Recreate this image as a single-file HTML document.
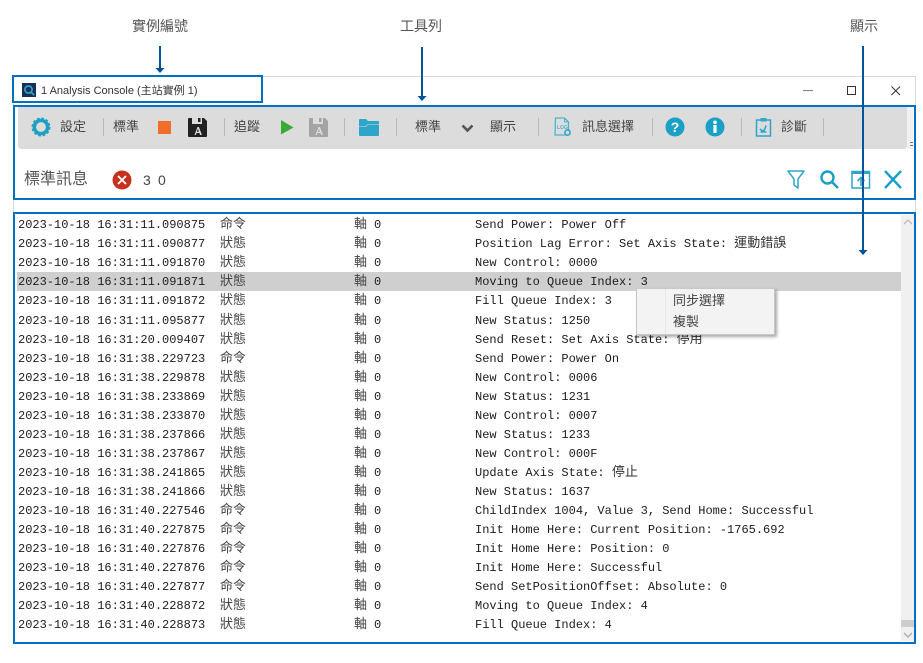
<!DOCTYPE html>
<html><head><meta charset="utf-8">
<style>
html,body{margin:0;padding:0;background:#fff;}
#p{position:relative;width:923px;height:663px;overflow:hidden;background:#fff;font-family:"Liberation Sans","Noto Sans CJK TC",sans-serif;color:#444;}
.a{position:absolute;}
.t{position:absolute;white-space:nowrap;line-height:18px;height:18px;font-size:13px;color:#444;}
.sep{position:absolute;top:118px;width:1px;height:18px;background:#b9b9b9;}
.r{position:absolute;left:0;height:19px;width:900px;}
.r span{position:absolute;top:1px;line-height:19px;white-space:pre;font-family:"Liberation Mono","Noto Sans CJK TC",monospace;font-size:12px;color:#1c1c1c;}
.r b{font-weight:normal;font-size:13px;line-height:0;font-family:"Noto Sans CJK TC",sans-serif;color:#444;}
.r span.m b{color:#333;}
svg{position:absolute;overflow:visible;}
</style></head>
<body><div id="p">
<div class="t" style="left:132px;top:17px;font-size:14px;color:#555">實例編號</div>
<div class="t" style="left:400px;top:17px;font-size:14px;color:#555">工具列</div>
<div class="t" style="left:850px;top:17px;font-size:14px;color:#555">顯示</div>

<!-- window -->
<div class="a" style="left:13px;top:76px;width:901px;height:566px;border:1px solid #d9d9d9;"></div>
<div class="a" style="left:22px;top:83px;width:14px;height:14px;background:#14305a;"></div>
<svg style="left:22px;top:83px" width="14" height="14"><circle cx="6.500" cy="6.500" r="3.600" fill="none" stroke="#35a5c8" stroke-width="1.600"/><path d="M9 9l3.200 3.200" stroke="#35a5c8" stroke-width="1.600"/></svg>
<div class="t" style="left:41px;top:82px;font-size:11px;color:#333">1 Analysis Console (主站實例 1)</div>
<svg style="left:800px;top:84px" width="105" height="14"><path d="M3 6.500h10" stroke="#888" stroke-width="1.200"/><rect x="47.500" y="2.500" width="8" height="8" fill="none" stroke="#333" stroke-width="1"/><path d="M91.500 2.500l8.500 8.500M100 2.500l-8.500 8.500" stroke="#333" stroke-width="1" fill="none"/></svg>

<!-- toolbar -->
<div class="a" style="left:18px;top:107px;width:889px;height:42px;background:#dcdcdc;border-radius:0 0 3px 3px;"></div>
<div class="a" style="left:907px;top:107px;width:6px;height:42px;background:#f1f1f1;"></div>
<div class="a" style="left:910px;top:142px;width:3px;height:1px;background:#777;"></div>
<div class="a" style="left:910px;top:145px;width:3px;height:1px;background:#777;"></div>

<svg style="left:31px;top:117px" width="20" height="20"><circle cx="10" cy="10" r="6.600" fill="none" stroke="#1f9fc4" stroke-width="3.400"/><circle cx="10" cy="10" r="8.500" fill="none" stroke="#1f9fc4" stroke-width="2" stroke-dasharray="2.700 1.750"/></svg>
<div class="t" style="left:60px;top:118px">設定</div>
<div class="sep" style="left:103px"></div>
<div class="t" style="left:113px;top:118px">標準</div>
<div class="a" style="left:158px;top:121px;width:13px;height:13px;background:#f26c2a;"></div>
<svg style="left:188px;top:117px" width="20" height="20"><path d="M1 1h3v6h10V1h2l3 3v15a1 1 0 0 1-1 1H1a1 1 0 0 1-1-1V2a1 1 0 0 1 1-1z" fill="#222"/><rect x="10" y="1" width="2.500" height="4" fill="#222"/><path d="M6.500 18l3-8h1.400l3 8h-1.800l-.6-2h-3l-.6 2zM8.800 14.800h2.100l-1-3.200z" fill="#ddd"/></svg>
<div class="sep" style="left:224px"></div>
<div class="t" style="left:234px;top:118px">追蹤</div>
<svg style="left:281px;top:120px" width="13" height="15"><path d="M0 0l12.500 7.500L0 14.500z" fill="#3aaa35"/></svg>
<svg style="left:309px;top:117px" width="20" height="20"><path d="M1 1h3v6h10V1h2l3 3v15a1 1 0 0 1-1 1H1a1 1 0 0 1-1-1V2a1 1 0 0 1 1-1z" fill="#a4a4a4"/><rect x="10" y="1" width="2.500" height="4" fill="#a4a4a4"/><path d="M6.500 18l3-8h1.400l3 8h-1.800l-.6-2h-3l-.6 2zM8.800 14.800h2.100l-1-3.200z" fill="#ddd"/></svg>
<div class="sep" style="left:344px"></div>
<svg style="left:359px;top:118px" width="21" height="18"><path d="M0 2a1 1 0 0 1 1-1h6l2 2h10a1 1 0 0 1 1 1v2.500H8.500l-2 2H0z" fill="#2ea6c9"/><path d="M0 9h6.800l2-2H20V17a1 1 0 0 1-1 1H1a1 1 0 0 1-1-1z" fill="#2ea6c9"/></svg>
<div class="sep" style="left:396px"></div>
<div class="t" style="left:415px;top:118px">標準</div>
<svg style="left:461px;top:124px" width="13" height="9"><path d="M1.500 1.500l5 5 5-5" fill="none" stroke="#555" stroke-width="2.600"/></svg>
<div class="t" style="left:490px;top:118px">顯示</div>
<div class="sep" style="left:538px"></div>
<svg style="left:554px;top:117px" width="18" height="20"><path d="M1.500 1h9l4 4v13h-13.500z" fill="none" stroke="#4cb3d1" stroke-width="1.300"/><path d="M10.500 1v4h4" fill="none" stroke="#4cb3d1" stroke-width="1"/><text x="3" y="12" font-size="5" font-weight="bold" fill="#4cb3d1" font-family="Liberation Sans">LOG</text><circle cx="13.500" cy="15.500" r="2.600" fill="#dcdcdc" stroke="#2ea6c9" stroke-width="1.600"/></svg>
<div class="t" style="left:582px;top:118px">訊息選擇</div>
<div class="sep" style="left:652px"></div>
<svg style="left:665px;top:117px" width="20" height="20"><circle cx="10" cy="10" r="9.500" fill="#18a0c6"/><text x="10" y="15" text-anchor="middle" font-size="14" font-weight="bold" fill="#fff" font-family="Liberation Sans">?</text></svg>
<svg style="left:705px;top:117px" width="20" height="20"><circle cx="10" cy="10" r="9.500" fill="#18a0c6"/><rect x="8.400" y="8" width="3.200" height="8" fill="#fff"/><circle cx="10" cy="5.300" r="1.800" fill="#fff"/></svg>
<div class="sep" style="left:741px"></div>
<svg style="left:755px;top:117px" width="17" height="20"><rect x="1.500" y="3" width="14" height="16" fill="none" stroke="#2ea6c9" stroke-width="1.500"/><rect x="5.500" y="1" width="6" height="3.500" fill="#2ea6c9"/><path d="M5 12l2.500 2 2-1 1.500-4.500M5.500 15h6" fill="none" stroke="#2ea6c9" stroke-width="1.600"/></svg>
<div class="t" style="left:781px;top:118px">診斷</div>
<div class="sep" style="left:823px"></div>

<!-- second row -->
<div class="t" style="left:24px;top:171px;font-size:16px;color:#555">標準訊息</div>
<svg style="left:112px;top:170px" width="20" height="20"><circle cx="10" cy="10" r="9.500" fill="#c5321f"/><path d="M6 6l8 8M14 6l-8 8" stroke="#fff" stroke-width="1.800"/></svg>
<div class="t" style="left:143px;top:171px;font-size:14px;color:#444">3</div>
<div class="t" style="left:158px;top:171px;font-size:14px;color:#444">0</div>
<svg style="left:787px;top:170px" width="18" height="19"><path d="M1 1h16l-6 8v9l-4-3V9z" fill="none" stroke="#2ea6c9" stroke-width="1.500" stroke-linejoin="round"/></svg>
<svg style="left:820px;top:170px" width="19" height="19"><circle cx="7.500" cy="7.500" r="6" fill="none" stroke="#18a0c6" stroke-width="2.400"/><path d="M12 12l6 6" stroke="#18a0c6" stroke-width="2.600"/></svg>
<svg style="left:851px;top:170px" width="20" height="19"><rect x="1" y="1.500" width="17.500" height="16.500" fill="none" stroke="#2ea6c9" stroke-width="1.500"/><path d="M1 3h17.500" stroke="#2ea6c9" stroke-width="2"/><path d="M10 16V8M6.500 11l3.500-3.500 3.500 3.500" fill="none" stroke="#2ea6c9" stroke-width="1.600"/></svg>
<svg style="left:883px;top:170px" width="20" height="19"><path d="M2 1l16 17M18 1L2 18" stroke="#18a0c6" stroke-width="2.400"/></svg>

<!-- log -->
<div class="a" style="left:17px;top:272px;width:884px;height:19px;background:#cfcfcf;"></div>
<div class="r" style="top:215px"><span style="left:18px">2023-10-18 16:31:11.090875</span><span style="left:220px"><b>命令</b></span><span style="left:354px"><b>軸</b></span><span style="left:374px">0</span><span class="m" style="left:475px">Send Power: Power Off</span></div>
<div class="r" style="top:234px"><span style="left:18px">2023-10-18 16:31:11.090877</span><span style="left:220px"><b>狀態</b></span><span style="left:354px"><b>軸</b></span><span style="left:374px">0</span><span class="m" style="left:475px">Position Lag Error: Set Axis State: <b>運動錯誤</b></span></div>
<div class="r" style="top:253px"><span style="left:18px">2023-10-18 16:31:11.091870</span><span style="left:220px"><b>狀態</b></span><span style="left:354px"><b>軸</b></span><span style="left:374px">0</span><span class="m" style="left:475px">New Control: 0000</span></div>
<div class="r" style="top:272px"><span style="left:18px">2023-10-18 16:31:11.091871</span><span style="left:220px"><b>狀態</b></span><span style="left:354px"><b>軸</b></span><span style="left:374px">0</span><span class="m" style="left:475px">Moving to Queue Index: 3</span></div>
<div class="r" style="top:291px"><span style="left:18px">2023-10-18 16:31:11.091872</span><span style="left:220px"><b>狀態</b></span><span style="left:354px"><b>軸</b></span><span style="left:374px">0</span><span class="m" style="left:475px">Fill Queue Index: 3</span></div>
<div class="r" style="top:311px"><span style="left:18px">2023-10-18 16:31:11.095877</span><span style="left:220px"><b>狀態</b></span><span style="left:354px"><b>軸</b></span><span style="left:374px">0</span><span class="m" style="left:475px">New Status: 1250</span></div>
<div class="r" style="top:330px"><span style="left:18px">2023-10-18 16:31:20.009407</span><span style="left:220px"><b>狀態</b></span><span style="left:354px"><b>軸</b></span><span style="left:374px">0</span><span class="m" style="left:475px">Send Reset: Set Axis State: <b>停用</b></span></div>
<div class="r" style="top:349px"><span style="left:18px">2023-10-18 16:31:38.229723</span><span style="left:220px"><b>命令</b></span><span style="left:354px"><b>軸</b></span><span style="left:374px">0</span><span class="m" style="left:475px">Send Power: Power On</span></div>
<div class="r" style="top:368px"><span style="left:18px">2023-10-18 16:31:38.229878</span><span style="left:220px"><b>狀態</b></span><span style="left:354px"><b>軸</b></span><span style="left:374px">0</span><span class="m" style="left:475px">New Control: 0006</span></div>
<div class="r" style="top:387px"><span style="left:18px">2023-10-18 16:31:38.233869</span><span style="left:220px"><b>狀態</b></span><span style="left:354px"><b>軸</b></span><span style="left:374px">0</span><span class="m" style="left:475px">New Status: 1231</span></div>
<div class="r" style="top:406px"><span style="left:18px">2023-10-18 16:31:38.233870</span><span style="left:220px"><b>狀態</b></span><span style="left:354px"><b>軸</b></span><span style="left:374px">0</span><span class="m" style="left:475px">New Control: 0007</span></div>
<div class="r" style="top:425px"><span style="left:18px">2023-10-18 16:31:38.237866</span><span style="left:220px"><b>狀態</b></span><span style="left:354px"><b>軸</b></span><span style="left:374px">0</span><span class="m" style="left:475px">New Status: 1233</span></div>
<div class="r" style="top:444px"><span style="left:18px">2023-10-18 16:31:38.237867</span><span style="left:220px"><b>狀態</b></span><span style="left:354px"><b>軸</b></span><span style="left:374px">0</span><span class="m" style="left:475px">New Control: 000F</span></div>
<div class="r" style="top:463px"><span style="left:18px">2023-10-18 16:31:38.241865</span><span style="left:220px"><b>狀態</b></span><span style="left:354px"><b>軸</b></span><span style="left:374px">0</span><span class="m" style="left:475px">Update Axis State: <b>停止</b></span></div>
<div class="r" style="top:482px"><span style="left:18px">2023-10-18 16:31:38.241866</span><span style="left:220px"><b>狀態</b></span><span style="left:354px"><b>軸</b></span><span style="left:374px">0</span><span class="m" style="left:475px">New Status: 1637</span></div>
<div class="r" style="top:501px"><span style="left:18px">2023-10-18 16:31:40.227546</span><span style="left:220px"><b>命令</b></span><span style="left:354px"><b>軸</b></span><span style="left:374px">0</span><span class="m" style="left:475px">ChildIndex 1004, Value 3, Send Home: Successful</span></div>
<div class="r" style="top:520px"><span style="left:18px">2023-10-18 16:31:40.227875</span><span style="left:220px"><b>命令</b></span><span style="left:354px"><b>軸</b></span><span style="left:374px">0</span><span class="m" style="left:475px">Init Home Here: Current Position: -1765.692</span></div>
<div class="r" style="top:539px"><span style="left:18px">2023-10-18 16:31:40.227876</span><span style="left:220px"><b>命令</b></span><span style="left:354px"><b>軸</b></span><span style="left:374px">0</span><span class="m" style="left:475px">Init Home Here: Position: 0</span></div>
<div class="r" style="top:558px"><span style="left:18px">2023-10-18 16:31:40.227876</span><span style="left:220px"><b>命令</b></span><span style="left:354px"><b>軸</b></span><span style="left:374px">0</span><span class="m" style="left:475px">Init Home Here: Successful</span></div>
<div class="r" style="top:577px"><span style="left:18px">2023-10-18 16:31:40.227877</span><span style="left:220px"><b>命令</b></span><span style="left:354px"><b>軸</b></span><span style="left:374px">0</span><span class="m" style="left:475px">Send SetPositionOffset: Absolute: 0</span></div>
<div class="r" style="top:596px"><span style="left:18px">2023-10-18 16:31:40.228872</span><span style="left:220px"><b>狀態</b></span><span style="left:354px"><b>軸</b></span><span style="left:374px">0</span><span class="m" style="left:475px">Moving to Queue Index: 4</span></div>
<div class="r" style="top:615px"><span style="left:18px">2023-10-18 16:31:40.228873</span><span style="left:220px"><b>狀態</b></span><span style="left:354px"><b>軸</b></span><span style="left:374px">0</span><span class="m" style="left:475px">Fill Queue Index: 4</span></div>

<!-- scrollbar -->
<div class="a" style="left:901px;top:215px;width:13px;height:426px;background:#f0f0f0;"></div>
<div class="a" style="left:901px;top:620px;width:13px;height:7px;background:#cdcdcd;"></div>
<svg style="left:903px;top:218px" width="10" height="8"><path d="M1 6l4-4 4 4" fill="none" stroke="#bbb" stroke-width="1.300"/></svg>
<svg style="left:903px;top:631px" width="10" height="8"><path d="M1 2l4 4 4-4" fill="none" stroke="#aaa" stroke-width="1.300"/></svg>

<!-- context menu -->
<div class="a" style="left:636px;top:288px;width:137px;height:45px;background:#f3f3f3;border:1px solid #c8c8c8;box-shadow:2px 2px 3px rgba(0,0,0,.35);"></div>
<div class="a" style="left:665px;top:289px;width:1px;height:45px;background:#e6e6e6;"></div>
<div class="t" style="left:673px;top:292px;font-size:13px;color:#444">同步選擇</div>
<div class="t" style="left:673px;top:313px;font-size:13px;color:#444">複製</div>

<!-- blue annotation boxes -->
<div class="a" style="left:12px;top:75px;width:247px;height:24px;border:2px solid #0070c0;"></div>
<div class="a" style="left:13px;top:105px;width:899px;height:91px;border:2px solid #0070c0;"></div>
<div class="a" style="left:13px;top:212px;width:899px;height:428px;border:2px solid #0070c0;"></div>

<!-- arrows -->
<svg style="left:0;top:0" width="923" height="663"><g fill="#00559b"><rect x="159" y="46" width="2" height="23"/><path d="M155.500 68h9l-4.500 5z"/><rect x="421" y="47" width="2" height="50"/><path d="M417.500 96h9l-4.500 5z"/><rect x="862" y="46" width="2" height="205"/><path d="M858.500 250h9l-4.500 5z"/></g></svg>
</div></body></html>
